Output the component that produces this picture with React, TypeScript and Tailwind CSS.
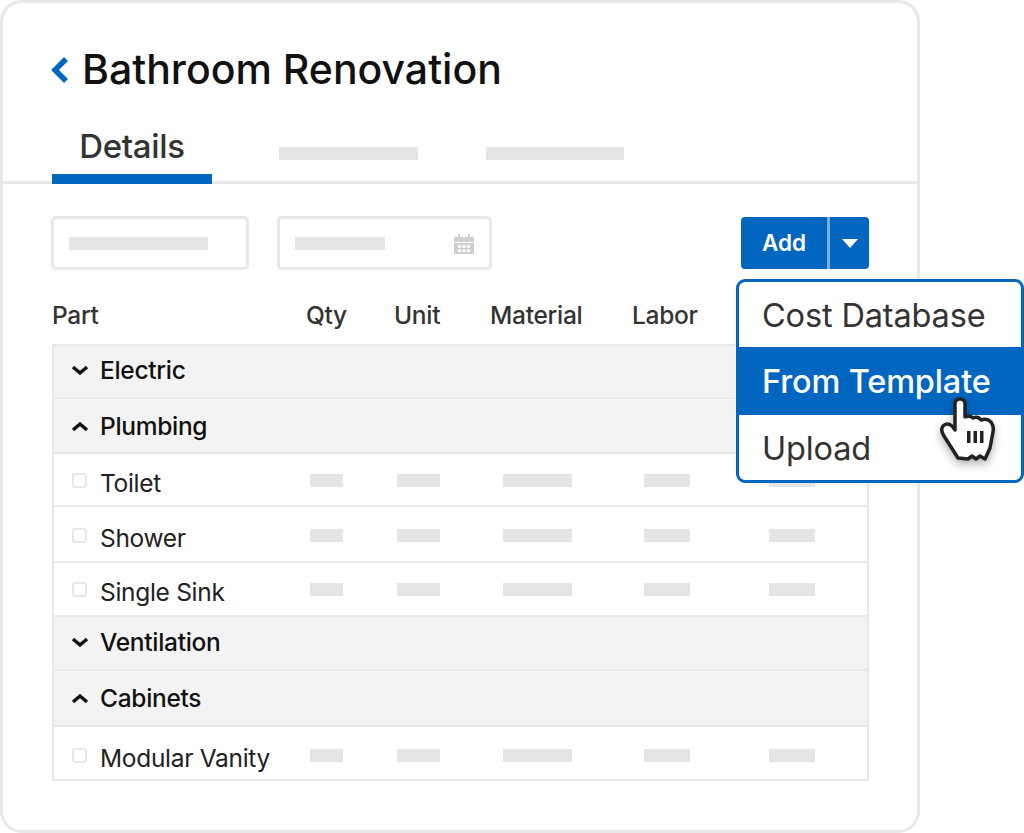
import React from "react";

const Bar = ({ className }: { className: string }) => <div className={`h-[13px] bg-[#e5e5e5] ${className}`} />;

const Cols = () => (
  <>
    <Bar className="w-[33px] ml-[238px]" />
    <Bar className="w-[43px] ml-[54px]" />
    <Bar className="w-[69px] ml-[63px]" />
    <Bar className="w-[46px] ml-[72px]" />
    <Bar className="w-[46px] ml-[79px]" />
  </>
);

const Group = ({ label, open, h }: { label: string; open?: boolean; h: string }) => (
  <div className={`${h} flex items-center pl-[17px] bg-[#f3f3f3] border-b-2 border-[#e8e8e8]`}>
    <div className={`flex items-center ${open ? "mt-[1px]" : "-mt-[3px]"}`}>
      <svg width="18" height="11" viewBox="0 0 18 11" className="shrink-0">
        <path d={open ? "M2 9 L9 3 L16 9" : "M2 2 L9 8 L16 2"} fill="none" stroke="#111" strokeWidth="3.5" />
      </svg>
      <span className="ml-[11px] text-[24.5px] font-medium text-[#111] tracking-[-0.3px]">{label}</span>
    </div>
  </div>
);

const Row = ({ label, h, last }: { label: string; h: string; last?: boolean }) => (
  <div className={`${h} flex items-center pl-[18px] ${last ? "" : "border-b-2 border-[#e8e8e8]"}`}>
    <div className="w-[15px] h-[15px] rounded-[3px] border-2 border-[#e8e8e8] shrink-0 mt-[1px]" />
    <span className="ml-[13px] w-[0px] whitespace-nowrap text-[24.5px] text-[#222] tracking-[-0.3px] mt-[7px]">{label}</span>
    <div className="flex items-center mt-[1px] -ml-[28px]">
      <Cols />
    </div>
  </div>
);

const Hand = () => (
  <svg width="80" height="80" viewBox="0 0 80 80" className="absolute left-[930px] top-[390px] drop-shadow-[0_4px_4px_rgba(0,0,0,0.3)]">
    <path
      d="M25 40 L25 14 Q25 9 30 9 Q35 9 35 14 L35 27 Q40 25 43 28 Q48 26 51 30 Q57 28 61 32 Q64 36 63 42 L60 58 L55 69 L50 66 L46 69 L42 66 L38 69 L28 68 L14 46 Q10 40 13 36 Q17 32 22 36 Z"
      fill="#fff"
      stroke="#222"
      strokeWidth="3.5"
      strokeLinejoin="round"
    />
    <path d="M37 41h3.500v12H37zM43.500 41H47v12h-3.500zM50 41h3.500v12H50z" fill="#222" />
  </svg>
);

export default function App() {
  return (
    <div className="relative w-[1024px] h-[833px] bg-white overflow-hidden" style={{ fontFamily: '"Inter", "Liberation Sans", sans-serif' }}>
      <div className="w-[920px] h-[833px] border-[3px] border-[#e8e8e8] rounded-[22px] bg-white">
        <div className="flex items-center h-[127px] pl-[47px] pt-[6px]">
          <svg width="19" height="28" viewBox="0 0 19 28" className="shrink-0">
            <path d="M16 3 L5 14 L16 25" fill="none" stroke="#0066c0" strokeWidth="5.500" />
          </svg>
          <h1 className="ml-[13px] text-[41px] font-medium text-[#111] leading-none">Bathroom Renovation</h1>
        </div>
        <div className="flex items-end h-[54px] pl-[49px] border-b-[3px] border-[#e8e8e8]">
          <div className="w-[160px] h-[54px] -mb-[3px] border-b-[10px] border-[#0066c0] flex justify-center">
            <span className="text-[33px] leading-none font-medium text-[#333] tracking-[-0.3px]">Details</span>
          </div>
          <Bar className="w-[139px] ml-[67px] mb-[21px]" />
          <Bar className="w-[138px] ml-[68px] mb-[21px]" />
        </div>
        <div className="pl-[49px] pr-[48px]">
          <div className="flex items-center pt-[32px]">
            <div className="w-[198px] h-[54px] -ml-[1px] border-[3px] border-[#e8e8e8] rounded-[5px] flex items-center pl-[15px]">
              <Bar className="w-[139px]" />
            </div>
            <div className="w-[215px] h-[54px] ml-[28px] border-[3px] border-[#e8e8e8] rounded-[5px] flex items-center justify-between pl-[15px] pr-[15px]">
              <Bar className="w-[90px]" />
              <svg width="20" height="21" viewBox="0 0 20 21">
                <path d="M0 4h4V1h2v3h8V1h2v3h4v5H0zM0 10h20v11H0z" fill="#cfcfcf" />
                <path d="M4 12h3v3H4zM8.500 12h3v3h-3zM13 12h3v3h-3zM4 16.500h3v2.500H4zM8.500 16.500h3v2.500h-3zM13 16.500h3v2.500h-3z" fill="#fff" />
              </svg>
            </div>
            <div className="ml-auto w-[128px] h-[52px] bg-[#0066c0] rounded-[4px] flex items-stretch">
              <div className="w-[86px] flex items-center justify-center text-white text-[22.500px] font-semibold">Add</div>
              <div className="w-[3px] bg-[#7fb0dc]" />
              <div className="flex-1 flex items-center justify-center">
                <svg width="16" height="9" viewBox="0 0 16 9"><path d="M0 0h16L8 9z" fill="#fff" /></svg>
              </div>
            </div>
          </div>
          <div className="flex items-center h-[74px] pt-[17px] text-[24.500px] font-medium text-[#333] whitespace-nowrap tracking-[-0.3px]">
            <span className="w-[254px]">Part</span>
            <span className="w-[88px]">Qty</span>
            <span className="w-[96px]">Unit</span>
            <span className="w-[142px]">Material</span>
            <span>Labor</span>
          </div>
          <div className="w-[817px] border-2 border-[#e8e8e8]">
            <Group label="Electric" h="h-[53px]" />
            <Group label="Plumbing" open h="h-[55px]" />
            <Row label="Toilet" h="h-[53px]" />
            <Row label="Shower" h="h-[56px] pt-[2px]" />
            <Row label="Single Sink" h="h-[54px]" />
            <Group label="Ventilation" h="h-[54px] pt-[2px]" />
            <Group label="Cabinets" open h="h-[56px]" />
            <Row label="Modular Vanity" h="h-[52px] pt-[3px]" last />
          </div>
        </div>
      </div>

      <div className="absolute left-[736px] top-[279px] w-[288px] h-[204px] bg-white border-[3px] border-[#0066c0] rounded-[9px] overflow-hidden text-[32.500px] tracking-[-0.15px] flex flex-col">
        <div className="h-[65px] flex items-center pl-[23px] pt-[3px] text-[#333]">Cost Database</div>
        <div className="h-[68px] flex items-center pl-[23px] pt-[3px] bg-[#0066c0] text-white font-medium">From Template</div>
        <div className="flex-1 flex items-center pl-[23px] pt-[3px] text-[#333]">Upload</div>
      </div>
      <Hand />
    </div>
  );
}
